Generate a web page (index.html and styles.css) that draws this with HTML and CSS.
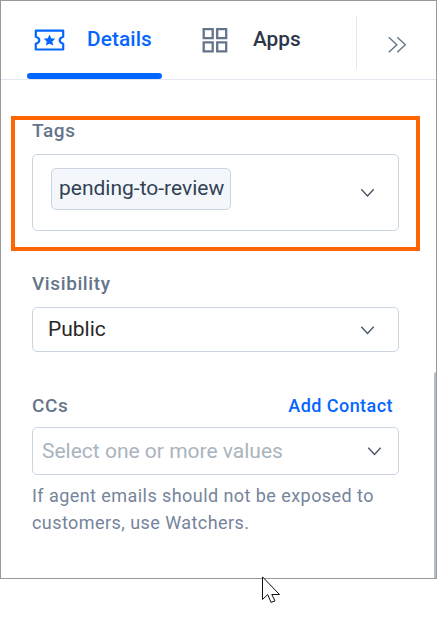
FILE: index.html
```html
<!DOCTYPE html>
<html lang="en">
<head>
<meta charset="utf-8">
<title>Ticket details</title>
<link rel="stylesheet" href="styles.css">
</head>
<body>
<main class="panel">
  <header class="header">
    <nav class="tabs">
      <a class="tab tab-details">
        <svg class="ticket" width="32" height="23" viewBox="0 0 32 23" fill="none">
          <path d="M1.8 1.7H29.2V7.7C27.7 8.2 25.7 9 25.7 11.2C25.7 13.4 27.7 14.2 29.2 14.7V20.5H1.8V14.7C3.3 14.2 5.3 13.4 5.3 11.2C5.3 9 3.3 8.2 1.8 7.7Z" stroke="currentColor" stroke-width="2.2" stroke-linejoin="round"/>
          <path d="M15.5 5.6L17.2 9.3L21.2 9.8L18.3 12.6L19.1 16.6L15.5 14.7L11.9 16.6L12.7 12.6L9.8 9.8L13.8 9.3Z" fill="currentColor"/>
        </svg>
        <span class="tab-text details-text">Details</span>
      </a>
      <a class="tab tab-apps">
        <svg width="26" height="25" viewBox="0 0 26 25" fill="none" stroke="#64748b" stroke-width="2.3">
          <path d="M1.7 1.2H10.7V10.2H1.7ZM15.2 1.2H24.2V10.2H15.2ZM1.7 14.3H10.7V23.3H1.7ZM15.2 14.3H24.2V23.3H15.2Z"/>
        </svg>
        <span class="tab-text apps-text">Apps</span>
      </a>
    </nav>
    <button class="collapse" aria-label="Collapse">
      <svg width="20" height="16" viewBox="0 0 20 16" fill="none" stroke="#64748b" stroke-width="1.4">
        <path d="M.8 .3L8.8 7.8L.8 15.3M9.3 .3L17.3 7.8L9.3 15.3"/>
      </svg>
    </button>
  </header>
  <section class="fields">
    <div class="field">
      <div class="label tags-label">Tags</div>
      <div class="select select-tags">
        <span class="chip">pending-to-review</span>
        <svg class="chevron" width="14" height="9" viewBox="0 0 14 9"><path d="M1.3 1.3L7.5 8L13.7 1.3"/></svg>
      </div>
    </div>
    <div class="field">
      <div class="label visibility-label">Visibility</div>
      <div class="select select-visibility">
        <span class="value">Public</span>
        <svg class="chevron" width="14" height="9" viewBox="0 0 14 9"><path d="M1.3 1.8L7.5 8.5L13.7 1.8"/></svg>
      </div>
    </div>
    <div class="field">
      <div class="label ccs-label"><span>CCs</span><a class="add">Add Contact</a></div>
      <div class="select select-ccs">
        <span class="placeholder">Select one or more values</span>
        <svg class="chevron" width="14" height="9" viewBox="0 0 14 9"><path d="M1.3 .8L7.5 7.5L13.7 .8"/></svg>
      </div>
      <p class="hint"><span>If agent emails should not be exposed to</span><br><span>customers, use Watchers.</span></p>
    </div>
  </section>
  <div class="scrollbar"></div>
  <div class="highlight"></div>
</main>
<svg class="cursor" width="20" height="29" viewBox="0 0 20 29"><path d="M1.5 .9V23.5L6.7 18.5L10 26.4L14 24.9L10.8 18.5H18.5Z" fill="#fff" stroke="#111" stroke-width="1"/></svg>
</body>
</html>
```
FILE: styles.css
```css
* { box-sizing: border-box; }
body {
  margin: 0;
  background: #fff;
  font-family: Roboto, "Liberation Sans", sans-serif;
  overflow: hidden;
}
.panel {
  position: relative;
  width: 437px;
  height: 579px;
  border: 1px solid #999;
  overflow: hidden;
}
.header {
  display: flex;
  height: 79px;
  border-bottom: 1px solid #e2e8f0;
}
.tabs {
  display: flex;
  gap: 40px;
  padding-left: 26px;
  flex: 1;
}
.tab { display: flex; align-items: center; }
.tab-details {
  width: 135px;
  padding-left: 7px;
  gap: 21px;
  color: #0566ff;
  position: relative;
}
.tab-details::after {
  content: "";
  position: absolute;
  left: 0;
  right: 0;
  bottom: 0;
  height: 6px;
  border-radius: 3px;
  background: #0566ff;
}
.tab-apps { color: #2b3648; gap: 25px; }
.tab-text {
  font-size: 20.8px;
  font-weight: 500;
  line-height: 24px;
  margin-bottom: 2px;
  white-space: nowrap;
}
.details-text { letter-spacing: .1px; }
.collapse {
  width: 80px;
  height: 53px;
  margin-top: 15px;
  padding: 5px 0 0 31px;
  border: 0;
  border-left: 1px solid #e2e8f0;
  background: none;
  display: flex;
  align-items: center;
}
.fields {
  width: 398px;
  padding: 38px 0 0 31px;
}
.label {
  height: 36px;
  font-size: 19px;
  line-height: 25px;
  font-weight: 500;
  letter-spacing: .6px;
  color: #64748b;
}
.select {
  display: flex;
  align-items: center;
  justify-content: space-between;
  border: 1px solid #cbd5e1;
  border-radius: 5px;
  padding-right: 24px;
}
.select-tags { height: 77px; padding-left: 18px; margin-bottom: 40px; }
.chip {
  width: 180px;
  height: 42px;
  margin-bottom: 7px;
  padding-left: 7px;
  border: 1px solid #cbd5e1;
  border-radius: 5px;
  background: #f3f7fb;
  color: #334155;
  font-size: 21px;
  line-height: 39px;
  white-space: nowrap;
}
.select-visibility { height: 45px; padding-left: 15px; margin-bottom: 40px; }
.value { font-size: 21px; line-height: 24px; color: #262626; margin-bottom: 1px; }
.ccs-label {
  display: flex;
  justify-content: space-between;
  height: 35px;
  line-height: 27px;
  padding-right: 6px;
}
.add { color: #0566ff; font-size: 18px; letter-spacing: .45px; }
.select-ccs { height: 48px; padding-left: 9px; padding-right: 17px; }
.placeholder { font-size: 21px; color: #aab4be; line-height: 24px; }
.chevron { fill: none; stroke: #475569; stroke-width: 1.4; overflow: visible; }
.hint {
  margin: 7px 0 0;
  font-size: 18px;
  line-height: 27px;
  letter-spacing: .44px;
  color: #75849b;
  white-space: nowrap;
}
.scrollbar {
  position: absolute;
  right: 0;
  top: 371px;
  bottom: 0;
  width: 2px;
  background: #b8bfcc;
  border-radius: 2px 0 0 0;
}
.highlight {
  position: absolute;
  left: 10px;
  top: 115px;
  width: 409px;
  height: 135px;
  border: 4px solid #ff6500;
}
.cursor { position: absolute; left: 261px; top: 576px; }
```
